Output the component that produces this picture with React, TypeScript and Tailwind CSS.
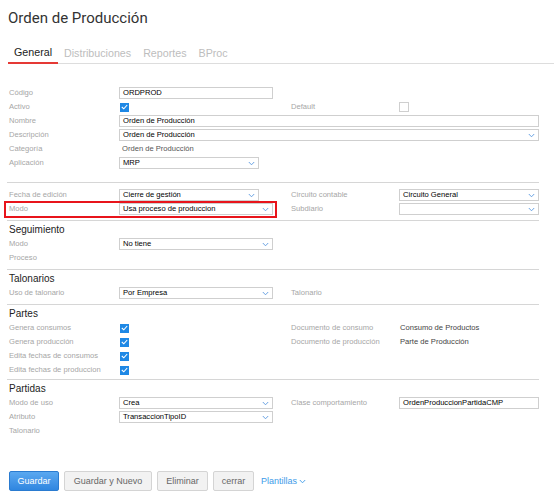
import React from 'react'

const chevron = (
  <svg width="7" height="5" viewBox="0 0 7 5" className="shrink-0">
    <path d="M0.8 1 L3.5 3.8 L6.2 1" fill="none" stroke="#5b9ae0" strokeWidth="0.9" />
  </svg>
)

function Label({ children, w = 'w-[119px]' }: { children?: React.ReactNode; w?: string }) {
  return (
    <div className={`${w} shrink-0 pl-[9px] text-[7.6px] text-[#a6a6a6] leading-none whitespace-nowrap`}>
      {children}
    </div>
  )
}

function RLabel({ children }: { children?: React.ReactNode }) {
  return (
    <div className="w-[108px] shrink-0 text-[7.6px] text-[#a6a6a6] leading-none whitespace-nowrap">{children}</div>
  )
}

function Input({ value, w }: { value?: string; w: string }) {
  return (
    <div className={`${w} h-[12px] shrink-0 border border-[#cfcfcf] bg-white px-[3px] flex items-center text-[7.6px] text-black leading-none`}>
      {value}
    </div>
  )
}

function Select({ value, w }: { value?: string; w: string }) {
  return (
    <div className={`${w} h-[12px] shrink-0 border border-[#cfcfcf] bg-white pl-[3px] pr-[3px] flex items-center justify-between text-[7.6px] text-black leading-none`}>
      <span>{value}</span>
      {chevron}
    </div>
  )
}

function Check({ on }: { on?: boolean }) {
  if (!on) return <div className="w-[10px] h-[10px] border border-[#cfcfcf] bg-white shrink-0" />
  return (
    <div className="w-[9px] h-[9px] bg-[#1e88e5] flex items-center justify-center shrink-0 ml-[1px]">
      <svg width="7" height="6" viewBox="0 0 7 6">
        <path d="M0.8 3 L2.8 4.8 L6.2 1" fill="none" stroke="white" strokeWidth="1.1" />
      </svg>
    </div>
  )
}

function Row({ children, extra }: { children: React.ReactNode; extra?: React.ReactNode }) {
  return <div className="relative h-[14px] flex items-center">{children}{extra}</div>
}

const Gap = () => <div className="w-[18px] shrink-0" />

function Divider() {
  return <div className="ml-[7px] w-[532px] h-px bg-[#d6d6d6]" />
}

function Heading({ children }: { children: React.ReactNode }) {
  return <div className="mt-[2px] h-[14px] flex items-center pl-[9px] text-[10px] text-[#222] leading-none">{children}</div>
}

export default function App() {
  return (
    <div className="w-[554px] h-[500px] bg-white font-['Liberation_Sans',Arial,sans-serif] overflow-hidden">
      <div className="h-[36px] flex items-center pl-[8px] font-['Roboto',sans-serif] text-[15px] text-[#333]">
        Orden de Producción
      </div>

      <div className="ml-[8px] h-[28px] flex items-end border-b border-[#dddddd] text-[10.7px] leading-[12px]">
        <div className="px-[6px] pb-[4px] border-b-2 border-[#e53935] -mb-px text-[#222]">General</div>
        <div className="px-[6px] pb-[4px] text-[#bdbdbd]">Distribuciones</div>
        <div className="px-[6px] pb-[4px] text-[#bdbdbd]">Reportes</div>
        <div className="px-[6px] pb-[4px] text-[#bdbdbd]">BProc</div>
      </div>

      <div className="pt-[22px]">
        <Row><Label>Código</Label><Input w="w-[154px]" value="ORDPROD" /></Row>
        <Row>
          <Label>Activo</Label>
          <div className="w-[154px] shrink-0"><Check on /></div>
          <Gap />
          <RLabel>Default</RLabel>
          <Check />
        </Row>
        <Row><Label>Nombre</Label><Input w="w-[420px]" value="Orden de Producción" /></Row>
        <Row><Label>Descripción</Label><Select w="w-[420px]" value="Orden de Producción" /></Row>
        <Row>
          <Label>Categoría</Label>
          <div className="pl-[3px] text-[7.6px] text-[#555] leading-none">Orden de Producción</div>
        </Row>
        <Row><Label>Aplicación</Label><Select w="w-[140px]" value="MRP" /></Row>
      </div>

      <div className="mt-[12px]">
        <Divider />
        <div className="pt-[5px] pb-[4px]">
          <Row>
            <Label>Fecha de edición</Label>
            <div className="w-[154px] shrink-0"><Select w="w-[140px]" value="Cierre de gestión" /></div>
            <Gap />
            <RLabel>Circuito contable</RLabel>
            <Select w="w-[140px]" value="Circuito General" />
          </Row>
          <Row
            extra={<div className="absolute left-[4px] -top-[1px] w-[273px] h-[17px] border-2 border-[#e8141b] pointer-events-none" />}
          >
            <Label>Modo</Label>
            <Select w="w-[154px]" value="Usa proceso de produccion" />
            <Gap />
            <RLabel>Subdiario</RLabel>
            <Select w="w-[140px]" />
          </Row>
        </div>
      </div>

      <Divider />
      <div className="pb-[4px]">
        <Heading>Seguimiento</Heading>
        <Row><Label>Modo</Label><Select w="w-[154px]" value="No tiene" /></Row>
        <Row><Label>Proceso</Label></Row>
      </div>

      <Divider />
      <div className="pb-[4px]">
        <Heading>Talonarios</Heading>
        <Row>
          <Label>Uso de talonario</Label>
          <Select w="w-[154px]" value="Por Empresa" />
          <Gap />
          <RLabel>Talonario</RLabel>
        </Row>
      </div>

      <Divider />
      <div className="pb-[2px]">
        <Heading>Partes</Heading>
        <Row>
          <Label>Genera consumos</Label>
          <div className="w-[154px] shrink-0"><Check on /></div>
          <Gap />
          <RLabel>Documento de consumo</RLabel>
          <div className="pl-[1px] text-[7.6px] text-[#444] leading-none">Consumo de Productos</div>
        </Row>
        <Row>
          <Label>Genera producción</Label>
          <div className="w-[154px] shrink-0"><Check on /></div>
          <Gap />
          <RLabel>Documento de producción</RLabel>
          <div className="pl-[1px] text-[7.6px] text-[#444] leading-none">Parte de Producción</div>
        </Row>
        <Row><Label>Edita fechas de consumos</Label><Check on /></Row>
        <Row><Label>Edita fechas de produccion</Label><Check on /></Row>
      </div>

      <Divider />
      <div>
        <Heading>Partidas</Heading>
        <Row>
          <Label>Modo de uso</Label>
          <Select w="w-[154px]" value="Crea" />
          <Gap />
          <RLabel>Clase comportamiento</RLabel>
          <Input w="w-[140px]" value="OrdenProduccionPartidaCMP" />
        </Row>
        <Row><Label>Atributo</Label><Select w="w-[154px]" value="TransaccionTipoID" /></Row>
        <Row><Label>Talonario</Label></Row>
      </div>

      <div className="mt-[33px] pl-[9px] flex items-center gap-[5px] text-[9px] leading-none">
        <button className="w-[50px] h-[20px] rounded-[2px] border border-[#2a7bd0] bg-gradient-to-b from-[#5aa8f0] to-[#2f86e0] text-white">
          Guardar
        </button>
        <button className="w-[88px] h-[20px] rounded-[2px] border border-[#d4d4d4] bg-[#f2f2f2] text-[#666]">
          Guardar y Nuevo
        </button>
        <button className="w-[51px] h-[20px] rounded-[2px] border border-[#d4d4d4] bg-[#f2f2f2] text-[#666]">
          Eliminar
        </button>
        <button className="w-[41px] h-[20px] rounded-[2px] border border-[#d4d4d4] bg-[#f2f2f2] text-[#666]">
          cerrar
        </button>
        <div className="ml-[2px] flex items-center gap-[2px] text-[#3d9be9]">
          Plantillas
          <svg width="7" height="5" viewBox="0 0 7 5">
            <path d="M0.8 1 L3.5 3.8 L6.2 1" fill="none" stroke="#3d9be9" strokeWidth="0.9" />
          </svg>
        </div>
      </div>
    </div>
  )
}
